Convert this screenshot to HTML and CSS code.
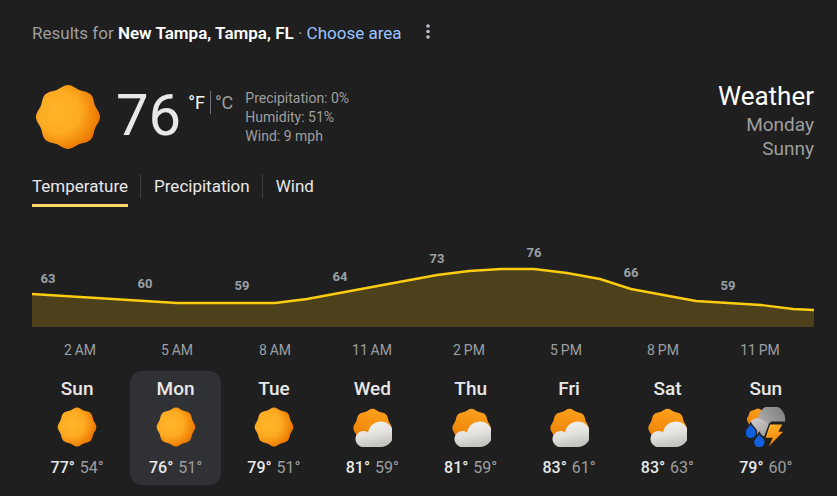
FILE: index.html
```
<!DOCTYPE html>
<html lang="en">
<head>
   <meta charset="utf-8">
   <meta name="viewport" content="width=device-width, initial-scale=1">
   <title>Weather</title>
   <link rel="stylesheet" href="styles.css">
</head>
<body>
   <!-- shared icons -->
   <svg class="defs" aria-hidden="true">
      <defs>
         <radialGradient id="sun-fill" cx="0.36" cy="0.42" r="0.66">
            <stop offset="0" stop-color="#ffb62a"/>
            <stop offset="0.5" stop-color="#fdab22"/>
            <stop offset="0.8" stop-color="#f28a0c"/>
            <stop offset="1" stop-color="#e87200"/>
         </radialGradient>
         <linearGradient id="sun-behind" x1="0.6" y1="0" x2="0.4" y2="1">
            <stop offset="0" stop-color="#fba01c"/>
            <stop offset="0.6" stop-color="#f28a0c"/>
            <stop offset="1" stop-color="#e87200"/>
         </linearGradient>
         <linearGradient id="cloud-fill" x1="0" y1="0" x2="0.3" y2="1">
            <stop offset="0" stop-color="#f7f6f4"/>
            <stop offset="0.6" stop-color="#e3e1de"/>
            <stop offset="1" stop-color="#c6c4c0"/>
         </linearGradient>
         <linearGradient id="storm-back" x1="0" y1="1" x2="1" y2="0.2">
            <stop offset="0" stop-color="#bdbdbd"/>
            <stop offset="1" stop-color="#7f7f7f"/>
         </linearGradient>
         <linearGradient id="storm-front" x1="0" y1="0" x2="0.7" y2="1">
            <stop offset="0" stop-color="#d5d3d1"/>
            <stop offset="1" stop-color="#a4a3a2"/>
         </linearGradient>
         <linearGradient id="bolt-fill" x1="0" y1="0" x2="0.3" y2="1">
            <stop offset="0" stop-color="#ffb62a"/>
            <stop offset="1" stop-color="#f07f08"/>
         </linearGradient>
         <path id="sun-shape" d="M32 0C32 4.4 28.52 7.7 27.07 11.21S25.74 19.52 22.63 22.63S14.72 25.62 11.21 27.07S4.4 32 0 32S-7.7 28.52 -11.21 27.07S-19.52 25.74 -22.63 22.63S-25.62 14.72 -27.07 11.21S-32 4.4 -32 0S-28.52 -7.7 -27.07 -11.21S-25.74 -19.52 -22.63 -22.63S-14.72 -25.62 -11.21 -27.07S-4.4 -32 0 -32S7.7 -28.52 11.21 -27.07S19.52 -25.74 22.63 -22.63S25.62 -14.72 27.07 -11.21S32 -4.4 32 0Z"/>
         <symbol id="sun" viewBox="-33 -33 66 66">
            <use href="#sun-shape" fill="url(#sun-fill)"/>
         </symbol>
         <symbol id="partly" viewBox="0 0 40 40">
            <use href="#sun-shape" fill="url(#sun-behind)" transform="translate(20.5 21) scale(0.6)"/>
            <path fill="url(#cloud-fill)" d="M11.5 40A8 8 0 1 1 16 25.4A12.8 12.8 0 1 1 28.5 40Z"/>
         </symbol>
         <symbol id="storm" viewBox="0 0 42 42">
            <use href="#sun-shape" fill="url(#sun-behind)" transform="translate(12.5 13) scale(0.36)"/>
            <path fill="url(#storm-back)" d="M13 10A13.8 13.8 0 0 1 41 15.3L26 15.3L19 31L12 27Z"/>
            <path fill="url(#storm-front)" d="M8 29A9 9 0 1 1 15.5 12.6Q22 15 23.5 19L18 31Z"/>
            <path class="cut" fill="url(#bolt-fill)" d="M25.3 18.5H38L34 26H39L24 41.5L28 32.2H20.5Z"/>
            <path class="cut" fill="#1160dc" d="M5 18.5C6.5 21.5 10.5 23.2 10.5 27A5.5 5.5 0 0 1 -.5 27C-.5 23.2 3.5 21.5 5 18.5Z"/>
            <path class="cut" fill="#1160dc" d="M14 28.5C15.5 31.5 19.5 33.2 19.5 36.8A5.5 5.5 0 0 1 8.5 36.8C8.5 33.2 12.5 31.5 14 28.5Z"/>
         </symbol>
      </defs>
   </svg>

   <header class="results">
      <div>Results for <b>New Tampa, Tampa, FL</b> · <a href="#">Choose area</a></div>
      <button type="button" class="more" aria-label="More options">
         <svg width="4" height="16" viewBox="0 0 4 16" fill="currentColor">
            <circle cx="2" cy="2" r="1.8"/>
            <circle cx="2" cy="7.5" r="1.8"/>
            <circle cx="2" cy="13" r="1.8"/>
         </svg>
      </button>
   </header>

   <section class="current">
      <svg class="current-icon"><use href="#sun"/></svg>
      <div class="degrees">76</div>
      <div class="units">
         <button type="button" class="unit active">°F</button>
         <button type="button" class="unit">°C</button>
      </div>
      <div class="details">
         <div>Precipitation: 0%</div>
         <div>Humidity: 51%</div>
         <div>Wind: 9 mph</div>
      </div>
      <div class="summary">
         <h1>Weather</h1>
         <div>Monday</div>
         <div>Sunny</div>
      </div>
   </section>

   <nav class="tabs">
      <button type="button" class="tab selected">Temperature</button>
      <button type="button" class="tab">Precipitation</button>
      <button type="button" class="tab">Wind</button>
   </nav>

   <svg class="chart" viewBox="0 0 782 120" role="img" aria-label="Hourly temperature">
      <path class="area" d="M0 54L145 63H243L275 59L405 35L437 31L469 29H502L535 33L568 39L599 49L664 61L729 65L761 69L782 71V87H0Z"/>
      <polyline class="curve" points="0,54 145,63 243,63 275,59 340,47 405,35 437,31 469,29 502,29 535,33 568,39 599,49 664,61 729,65 761,69 782,70"/>
      <g class="values">
         <text x="16" y="43">63</text>
         <text x="113" y="48">60</text>
         <text x="210" y="50">59</text>
         <text x="308" y="41">64</text>
         <text x="405" y="23">73</text>
         <text x="502" y="17">76</text>
         <text x="599" y="37">66</text>
         <text x="696" y="50">59</text>
      </g>
      <g class="hours">
         <text x="48" y="115">2&thinsp;AM</text>
         <text x="145" y="115">5&thinsp;AM</text>
         <text x="243" y="115">8&thinsp;AM</text>
         <text x="340" y="115">11&thinsp;AM</text>
         <text x="437" y="115">2&thinsp;PM</text>
         <text x="534" y="115">5&thinsp;PM</text>
         <text x="631" y="115">8&thinsp;PM</text>
         <text x="728" y="115">11&thinsp;PM</text>
      </g>
   </svg>

   <div class="days">
      <button type="button" class="day">
         <span class="name">Sun</span>
         <svg class="icon"><use href="#sun"/></svg>
         <span class="temps"><b>77°</b> 54°</span>
      </button>
      <button type="button" class="day today">
         <span class="name">Mon</span>
         <svg class="icon"><use href="#sun"/></svg>
         <span class="temps"><b>76°</b> 51°</span>
      </button>
      <button type="button" class="day">
         <span class="name">Tue</span>
         <svg class="icon"><use href="#sun"/></svg>
         <span class="temps"><b>79°</b> 51°</span>
      </button>
      <button type="button" class="day">
         <span class="name">Wed</span>
         <svg class="icon"><use href="#partly"/></svg>
         <span class="temps"><b>81°</b> 59°</span>
      </button>
      <button type="button" class="day">
         <span class="name">Thu</span>
         <svg class="icon"><use href="#partly"/></svg>
         <span class="temps"><b>81°</b> 59°</span>
      </button>
      <button type="button" class="day">
         <span class="name">Fri</span>
         <svg class="icon"><use href="#partly"/></svg>
         <span class="temps"><b>83°</b> 61°</span>
      </button>
      <button type="button" class="day">
         <span class="name">Sat</span>
         <svg class="icon"><use href="#partly"/></svg>
         <span class="temps"><b>83°</b> 63°</span>
      </button>
      <button type="button" class="day">
         <span class="name">Sun</span>
         <svg class="icon"><use href="#storm"/></svg>
         <span class="temps"><b>79°</b> 60°</span>
      </button>
   </div>
</body>
</html>
```
FILE: styles.css
```
body{
   margin: 0;
   padding: 22px 23px 11px 32px;
   background-color: #1f1f1f;
   color: #9e9e9e;
   font-family: Roboto, Arial, sans-serif;
   font-size: 16px;
}

button{
   margin: 0;
   padding: 0;
   border: 0;
   background: none;
   color: inherit;
   font: inherit;
   cursor: pointer;
}

.defs{
   position: absolute;
   width: 0;
   height: 0;
}

.results{
   display: flex;
   align-items: flex-start;
   gap: 24px;
   font-size: 17px;
   line-height: 22px;
}

.results b{
   color: #ffffff;
   font-weight: 600;
}

.results a{
   color: #99c3ff;
   text-decoration: none;
}

.more{
   display: flex;
   padding-top: 2px;
   color: #bdc1c6;
}

.current{
   display: flex;
   align-items: flex-start;
   margin-top: 40px;
}

.current-icon{
   width: 66px;
   height: 66px;
   margin-left: 3px;
}

.degrees{
   margin-left: 15px;
   color: #e8e8e8;
   font-size: 58px;
   line-height: 62px;
}

.units{
   display: flex;
   margin: 7px 0 0 7px;
   font-size: 18px;
   line-height: 23px;
}

.unit.active{
   padding-right: 5px;
   border-right: 1px solid #70757a;
   color: #ffffff;
}

.unit + .unit{
   padding-left: 4px;
}

.details{
   margin: 5px 0 0 12px;
   font-size: 14px;
   line-height: 19px;
}

.summary{
   margin-left: auto;
   text-align: right;
   font-size: 19px;
   line-height: 24px;
}

.summary h1{
   margin: 0;
   padding-bottom: 5px;
   color: #ffffff;
   font-size: 26px;
   font-weight: 400;
   line-height: 24px;
}

.tabs{
   display: flex;
   align-items: flex-start;
   margin-top: 13px;
   color: #e8e8e8;
   font-size: 17px;
}

.tab{
   line-height: 24px;
}

.tab + .tab{
   margin-left: 12px;
   padding-left: 13px;
   border-left: 1px solid #3c4043;
}

.tab.selected{
   padding-bottom: 6px;
   border-bottom: 3px solid #fdd663;
}

.chart{
   display: block;
   width: 100%;
   margin-top: 33px;
}

.area{
   fill: #4c411a;
}

.curve{
   fill: none;
   stroke: #fccc11;
   stroke-width: 2.4;
}

.values,
.hours{
   fill: #9aa0a6;
   font-size: 14px;
   text-anchor: middle;
}

.values{
   font-size: 13px;
   font-weight: 700;
}

.days{
   display: grid;
   grid-template-columns: repeat(8, 1fr);
   gap: 8px;
   margin: 11px 3px 0 0;
}

.day{
   display: flex;
   flex-direction: column;
   align-items: center;
   padding: 5px 0 7px;
   border-radius: 12px;
}

.today{
   background-color: #303134;
}

.name{
   color: #e8e8e8;
   font-size: 19px;
   font-weight: 500;
   line-height: 25px;
}

.icon{
   width: 40px;
   height: 40px;
   margin: 6px 0 11px;
   overflow: visible;
}

/* dark gap between the storm cloud and what falls from it */
.cut{
   stroke: #1f1f1f;
   stroke-width: 3;
   paint-order: stroke;
}

.temps{
   line-height: 20px;
}

.temps b{
   margin-right: 1px;
   color: #e8e8e8;
   font-weight: 500;
}
```
